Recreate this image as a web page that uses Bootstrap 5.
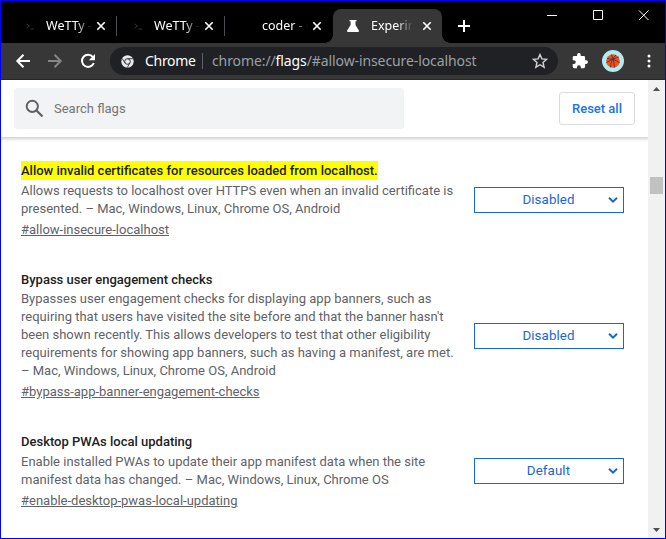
<!DOCTYPE html>
<html lang="en">
<head>
<meta charset="utf-8">
<title>Experiments</title>
<link rel="stylesheet" href="https://cdn.jsdelivr.net/npm/bootstrap@5.3.0/dist/css/bootstrap.min.css">
<style>
body{font-family:Roboto,"Liberation Sans",sans-serif;font-size:13px;line-height:18px;color:#5f6368}
.window{width:666px;height:539px;border:1px solid #00f}
.window svg{display:block;flex:none}
.tabstrip{height:42px;background:#000;padding-top:8px;padding-left:8px;color:#fff;font:12.5px/34px "Noto Sans",sans-serif}
.browser-tab{width:108px;height:34px;padding:0 11px 0 17px}
.browser-tab .label{width:46px;margin-left:11px;white-space:nowrap;overflow:hidden;-webkit-mask-image:linear-gradient(90deg,#000 65%,transparent)}
.browser-tab .glyph{width:9px;height:34px}
.divided{background:linear-gradient(#4b4d51,#4b4d51) right 0 top 7px/1px 20px no-repeat}
.current{width:109px;background:#373737;border-radius:8px 8px 0 0;padding:0 10px 0 14px}
.current::before,.current::after{content:"";position:absolute;bottom:0;width:8px;height:8px;background:radial-gradient(circle at 0 0,transparent 7.5px,#373737 8px)}
.current::before{left:-8px}
.current::after{right:-8px;background:radial-gradient(circle at 100% 0,transparent 7.5px,#373737 8px)}
.toolbar{height:37px;background:#373737;border-bottom:1px solid #272727;padding:4px 10px 4px 13px}
.omnibox{width:448px;height:28px;border-radius:14px;background:#202124;margin-left:13px;padding:0 10px 0 11px;font:14px/28px "Noto Sans",sans-serif;color:#9aa0a6;white-space:nowrap}
.origin{width:49px;margin-left:11px;letter-spacing:-.3px}
.bar{width:1px;height:16px;background:#5f6368;margin:0 9px 0 8px}
.url{letter-spacing:-.1px}
.avatar{width:22px;height:22px;border-radius:50%;background:#b2ebf2;margin-left:14px}
.viewport{height:458px;background:#fff}
.pane{width:647px}
.flag-header{height:57px;padding:0 13px;box-shadow:0 1px 3px 1px rgba(60,64,67,.25);clip-path:inset(0 0 -5px 0)}
.search{width:390px;height:41px;border-radius:3px;background:#f1f3f4;padding-left:10px;color:#757575}
.reset.btn{width:76px;height:33px;border:1px solid #dadce0;border-radius:3px;padding:0;font-size:13px;font-weight:500;color:#1a73e8}
.flags{padding:24px 24px 0 20px}
.experiment{height:109px}
.experiment.tall{height:162px}
.experiment h2{font-size:13px;line-height:19px;font-weight:500;color:#202124;margin:0}
.hit{background:#ff0;display:inline-block}
.copy{white-space:nowrap;padding-top:2px}
.tall .copy{padding-top:1px}
.permalink{color:#5f6368;display:inline-block;margin-top:3px}
.choice{width:150px;height:26px;border:1px solid #1967d2;color:#1967d2;margin-top:26px;padding:0 5px 0 14px}
.tall .choice{margin-top:53px}
.choice span{letter-spacing:.1px;font-size:13.33px}
.scroll{width:17px;background:#f1f1f1;padding:7px 0 6px}
.thumb{width:13px;height:17px;background:#c1c1c1}
</style>
<script src="https://cdn.jsdelivr.net/npm/bootstrap@5.3.0/dist/js/bootstrap.bundle.min.js"></script>
</head>
<body class="overflow-hidden">
<svg class="d-none">
<symbol id="x" viewBox="0 0 10 10"><path d="M1.3 1.3l7.4 7.4M8.7 1.3L1.3 8.7" fill="none" stroke="#fff" stroke-width="1.6"/></symbol>
<symbol id="prompt" viewBox="0 0 9 7"><path d="M.5 1l3 2-3 2M4.5 6H8" fill="none" stroke="#444" stroke-width=".8"/></symbol>
<symbol id="chevron" viewBox="0 0 10 8"><path d="M1 1.8L5 5.7 9 1.8" fill="none" stroke="#1967d2" stroke-width="2"/></symbol>
</svg>
<div class="window d-flex flex-column">
<div class="tabstrip d-flex">
  <div class="browser-tab divided d-flex align-items-center"><svg width="9" height="7"><use href="#prompt"/></svg><span class="label">WeTTy - c</span><svg class="ms-auto" width="10" height="10"><use href="#x"/></svg></div>
  <div class="browser-tab divided d-flex align-items-center"><svg width="9" height="7"><use href="#prompt"/></svg><span class="label">WeTTy - c</span><svg class="ms-auto" width="10" height="10"><use href="#x"/></svg></div>
  <div class="browser-tab d-flex align-items-center"><span class="glyph"></span><span class="label">coder - co</span><svg class="ms-auto" width="10" height="10"><use href="#x"/></svg></div>
  <div class="browser-tab current position-relative d-flex align-items-center"><svg width="12" height="12" viewBox="0 0 12 12"><path d="M2.5 0h7v1.2h-1V5L12 10.7Q12 12 11 12H1Q0 12 0 10.7L3.6 5V1.2H2.5z" fill="#fff"/></svg><span class="label ms-2 ps-1 me-auto">Experiments</span><svg width="10" height="10"><use href="#x"/></svg></div>
  <svg class="mt-2" style="margin-left:16px" width="12" height="18" viewBox="0 0 12 18"><path d="M0 9h12M6 3v12" stroke="#fff" stroke-width="2"/></svg>
  <div class="d-flex gap-4 ms-auto me-3">
    <svg width="102" height="12" viewBox="0 0 102 12"><path d="M0 6.5h10M46.5 1.5h9v9h-9zM92 1.5l9.5 9.5m0-9.5L92 11" fill="none" stroke="#fff"/></svg>
  </div>
</div>
<div class="toolbar d-flex align-items-center">
  <svg width="18" height="18" viewBox="0 0 18 18"><path d="M16 9H3.5M9.5 2.8L3.3 9l6.2 6.2" fill="none" stroke="#fff" stroke-width="2"/></svg>
  <svg style="margin-left:14px" width="18" height="18" viewBox="0 0 18 18"><path d="M2 9h12.5M8.5 2.8L14.7 9l-6.2 6.2" fill="none" stroke="#858585" stroke-width="2"/></svg>
  <svg style="margin-left:15px" width="18" height="18" viewBox="0 0 18 18"><path d="M13.9 5A6.1 6.1 0 1 0 14.8 11" fill="none" stroke="#fff" stroke-width="2"/><path d="M16 2v6.2H9.8z" fill="#fff"/></svg>
  <div class="omnibox d-flex align-items-center">
    <svg width="13" height="13" viewBox="0 0 13 13"><circle cx="6.5" cy="6.5" r="6.2" fill="#e8eaed"/><circle cx="6.5" cy="6.5" r="2.8" fill="none" stroke="#303134"/><path d="M6.5 3.7H12M4 8L1.1 3.4M8.9 7.9L6.2 12.7" stroke="#303134" stroke-width=".9"/></svg>
    <span class="origin text-white">Chrome</span><span class="bar"></span><span class="url">chrome://<span class="text-white">flags</span>/#allow-insecure-localhost</span>
    <svg class="ms-auto" width="16" height="16" viewBox="0 0 16 16"><path d="M8 1.5l1.9 4.4 4.7.4-3.6 3.2 1.1 4.7L8 11.7l-4.1 2.5L5 9.5 1.4 6.3l4.7-.4z" fill="none" stroke="#d0d2d5" stroke-width="1.4"/></svg>
  </div>
  <svg style="margin-left:14px" width="16" height="16" viewBox="1 1 22 22"><path d="M20.5 11H19V7a2 2 0 0 0-2-2h-4V3.500a2.500 2.500 0 0 0-5 0V5H4a2 2 0 0 0-2 2v3.800h1.500a2.700 2.700 0 0 1 0 5.400H2V20a2 2 0 0 0 2 2h3.800v-1.500a2.700 2.700 0 0 1 5.400 0V22H17a2 2 0 0 0 2-2v-4h1.500a2.500 2.500 0 0 0 0-5z" fill="#fff"/></svg>
  <div class="avatar d-flex align-items-center justify-content-center"><svg width="14" height="14" viewBox="0 0 14 14"><circle cx="7" cy="7" r="6.8" fill="#f4511e"/><path d="M1 4.500Q7 4 13.500 8.500M10 1Q5 5 4.500 13.300M5.500.5Q8 5 8.500 13.500M.4 8.500Q6 5 12.500 3" fill="none" stroke="#5b3430" stroke-width=".9"/></svg></div>
  <svg class="ms-auto me-1" width="4" height="14" viewBox="0 0 4 14"><g fill="#fff"><circle cx="2" cy="2" r="1.5"/><circle cx="2" cy="7" r="1.5"/><circle cx="2" cy="12" r="1.5"/></g></svg>
</div>
<div class="viewport d-flex">
  <main class="pane">
    <header class="flag-header d-flex align-items-center justify-content-between">
      <div class="search d-flex align-items-center"><svg width="22" height="22" viewBox="0 0 22 22"><circle cx="8.300" cy="8.300" r="5.600" fill="none" stroke="#5f6368" stroke-width="2"/><path d="M12.500 12.500l6 6" stroke="#5f6368" stroke-width="2.300"/></svg><span class="ms-1 ps-1">Search flags</span></div>
      <button class="reset btn">Reset all</button>
    </header>
    <div class="flags">
      <section class="experiment d-flex justify-content-between">
        <div><h2><span class="hit">Allow invalid certificates for resources loaded from localhost.</span></h2>
        <div class="copy">Allows requests to localhost over HTTPS even when an invalid certificate is<br>presented. – Mac, Windows, Linux, Chrome OS, Android</div>
        <a class="permalink" href="#allow-insecure-localhost">#allow-insecure-localhost</a></div>
        <div class="choice d-flex align-items-center"><span class="mx-auto">Disabled</span><svg width="10" height="8"><use href="#chevron"/></svg></div>
      </section>
      <section class="experiment tall d-flex justify-content-between">
        <div><h2>Bypass user engagement checks</h2>
        <div class="copy">Bypasses user engagement checks for displaying app banners, such as<br>requiring that users have visited the site before and that the banner hasn't<br>been shown recently. This allows developers to test that other eligibility<br>requirements for showing app banners, such as having a manifest, are met.<br>– Mac, Windows, Linux, Chrome OS, Android</div>
        <a class="permalink" href="#bypass-app-banner-engagement-checks">#bypass-app-banner-engagement-checks</a></div>
        <div class="choice d-flex align-items-center"><span class="mx-auto">Disabled</span><svg width="10" height="8"><use href="#chevron"/></svg></div>
      </section>
      <section class="experiment d-flex justify-content-between">
        <div><h2>Desktop PWAs local updating</h2>
        <div class="copy">Enable installed PWAs to update their app manifest data when the site<br>manifest data has changed. – Mac, Windows, Linux, Chrome OS</div>
        <a class="permalink" href="#enable-desktop-pwas-local-updating">#enable-desktop-pwas-local-updating</a></div>
        <div class="choice d-flex align-items-center"><span class="mx-auto">Default</span><svg width="10" height="8"><use href="#chevron"/></svg></div>
      </section>
    </div>
  </main>
  <div class="scroll d-flex flex-column align-items-center">
    <svg width="7" height="4" viewBox="0 0 7 4"><path d="M0 4L3.500 0 7 4z" fill="#505050"/></svg>
    <div class="thumb" style="margin-top:86px"></div>
    <svg class="mt-auto" width="7" height="4" viewBox="0 0 7 4"><path d="M0 0h7L3.500 4z" fill="#505050"/></svg>
  </div>
</div>
</div>
</body>
</html>
